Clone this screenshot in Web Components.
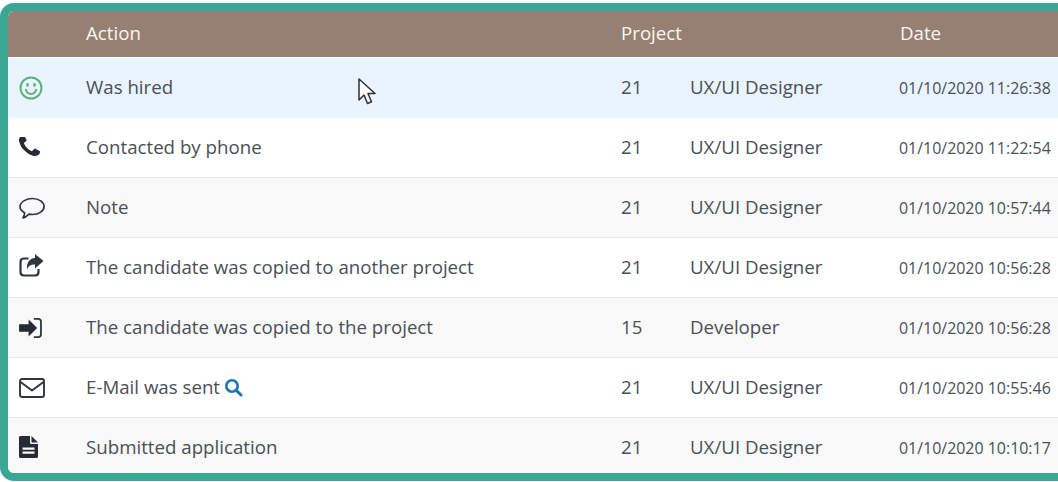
<!DOCTYPE html>
<html>
<head>
<meta charset="utf-8">
<style>
  html, body { margin: 0; background: #fff; overflow: hidden; }
  body { font-family: "Open Sans", sans-serif; }
</style>
</head>
<body>
<history-table>
  <history-row stripe="hover" project="21" job="UX/UI Designer" date="01/10/2020 11:26:38" icon="smile">Was hired</history-row>
  <history-row stripe="white" project="21" job="UX/UI Designer" date="01/10/2020 11:22:54" icon="phone">Contacted by phone</history-row>
  <history-row stripe="grey" project="21" job="UX/UI Designer" date="01/10/2020 10:57:44" icon="comment">Note</history-row>
  <history-row stripe="white" project="21" job="UX/UI Designer" date="01/10/2020 10:56:28" icon="share">The candidate was copied to another project</history-row>
  <history-row stripe="grey" project="15" job="Developer" date="01/10/2020 10:56:28" icon="signin">The candidate was copied to the project</history-row>
  <history-row stripe="white" project="21" job="UX/UI Designer" date="01/10/2020 10:55:46" icon="mail">E-Mail was sent <search-icon></search-icon></history-row>
  <history-row stripe="grey" last project="21" job="UX/UI Designer" date="01/10/2020 10:10:17" icon="file">Submitted application</history-row>
</history-table>
<mouse-cursor></mouse-cursor>

<script>
const icons = {
  smile: `<svg width="24" height="24" viewBox="0 0 24 24" fill="none" stroke="#5cb27c" stroke-width="2" stroke-linecap="round"><circle cx="12" cy="12" r="10.500"/><path d="M6.800 13.800c1 3 3.100 4.200 5.200 4.200s4.200-1.200 5.200-4.200"/><path d="M8.500 8.300v1.200M15.500 8.300v1.200" stroke-width="2.500"/></svg>`,
  phone: `<svg width="21" height="21" viewBox="192 256 1408 1408" fill="#262b33"><path d="M1600 1240q0 27-10 70.500t-21 68.500q-21 50-122 106-94 51-186 51-27 0-53-3.500t-57.500-12.500-47-14.500-55.500-20.500-49-18q-98-35-175-83-127-79-264-216t-216-264q-48-77-83-175-3-9-18-49t-20.500-55.500-14.500-47-12.500-57.500-3.500-53q0-92 51-186 56-101 106-122 25-11 68.500-21t70.500-10q14 0 21 3 18 6 53 76 11 19 30 54t35 63.500 31 53.500q3 4 17.500 25t21.500 35.500 7 28.500q0 20-28.500 50t-62 55-62 53-28.500 46q0 9 5 22.500t8.500 20.500 14 24 11.500 19q76 137 174 235t235 174q2 1 19 11.500t24 14 20.500 8.500 22.500 5q18 0 46-28.500t53-62 55-62 50-28.500q14 0 28.500 7t35.500 21.500 25 17.500q25 15 53.500 31t63.500 35 54 30q70 35 76 53 3 7 3 21z"/></svg>`,
  comment: `<svg width="26" height="23" viewBox="0 0 26 23" fill="none" stroke="#2f3640" stroke-width="1.700" stroke-linejoin="round" style="margin-top:2px"><path d="M13.500 1.500c6.400 0 11.600 3.600 11.600 8s-5.200 8-11.600 8c-1.200 0-2.400-.1-3.500-.4-1.600 1.600-3.700 3.400-6 3.700 1-1.200 1.500-3 1.600-5.100C2.700 14.300 1 12 1 9.500c0-4.400 6.100-8 12.500-8z"/></svg>`,
  share: `<svg width="25" height="23" viewBox="0 0 25 23" fill="none" style="margin-top:-4px"><path d="M9.500 4.500H5C3 4.500 1.500 6 1.500 8v10c0 2 1.500 3.500 3.500 3.500h11c2 0 3.500-1.500 3.500-3.500v-3" stroke="#2f3640" stroke-width="2.200"/><path fill="#2f3640" d="M16 0l8.500 7L16 14.500V10.500c-4 0-6.500 1-8 5C7.500 9 10 4.500 16 4z"/></svg>`,
  signin: `<svg width="23" height="20" viewBox="0 0 24 21"><path fill="#262b33" d="M10 1.500 19 10.500 10 19.500V14.500H0V6.500H10z"/><path d="M15.500 1h4.500c1.700 0 3 1.300 3 3v13c0 1.700-1.300 3-3 3h-4.500" fill="none" stroke="#2f3640" stroke-width="1.900"/></svg>`,
  mail: `<svg width="26" height="20" viewBox="0 0 26 20" fill="none" stroke="#2f3640" stroke-width="1.900" stroke-linejoin="round"><rect x="1" y="1" width="24" height="18" rx="2"/><path d="M1.500 4 13 12.500 24.500 4"/></svg>`,
  file: `<svg width="20" height="22" viewBox="0 0 20 22" fill="#262b33" style="margin-top:-1px"><path fill-rule="evenodd" d="M0 1.500C0 .700.700 0 1.500 0H11v6.500c0 .8.700 1.500 1.500 1.500H19v12.500c0 .8-.7 1.500-1.500 1.500h-16C.700 22 0 21.300 0 20.500zM3.500 11.500v2.200h12v-2.200zM3.500 15.500v2.200h12v-2.200z"/><path d="M12.500 0 19 6.500h-6.500z"/></svg>`
};

class HistoryTable extends HTMLElement {
  constructor() {
    super();
    this.attachShadow({mode: "open"});
    this.shadowRoot.innerHTML = `
      <style>
        :host { display: block; margin: 3px -40px 0 0; height: 478px; box-sizing: border-box;
                border: 8px solid #3aa795; border-radius: 14px; overflow: hidden; background: #fff; }
        .head { display: grid; grid-template-columns: 78px 535px 69px 210px 1fr; height: 46px; align-items: center;
                background: #968073; color: #fbf6f0; font-size: 18.700px; padding-bottom: 3px; box-sizing: border-box; }
        .head span:nth-child(3) { grid-column: 3 / 5; }
      </style>
      <div class="head"><span></span><span>Action</span><span>Project</span><span>Date</span></div>
      <slot></slot>
    `;
  }
}
customElements.define("history-table", HistoryTable);

class HistoryRow extends HTMLElement {
  constructor() {
    super();
    this.attachShadow({mode: "open"});
    this.shadowRoot.innerHTML = `
      <style>
        :host { display: grid; grid-template-columns: 78px 535px 69px 210px 1fr; height: 60px; align-items: center;
                box-sizing: border-box; border-bottom: 1px solid #e9e9e9; color: #4a4f57; font-size: 18.700px; background: #fff; }
        :host([stripe="hover"]) { background: #e9f4fe; border-bottom-color: #eef3f7; margin-top: 1px; }
        :host([stripe="grey"]) { background: #f9f9f9; }
        :host([last]) { border-bottom-color: transparent; }
        .ic { display: flex; align-items: center; padding-left: 11px; }
        .txt { padding-bottom: 2px; }
        .date { font-size: 15.950px; white-space: nowrap; margin-left: -1px; }
      </style>
      <div class="ic">${icons[this.getAttribute("icon")]}</div>
      <div class="txt"><slot></slot></div>
      <div class="txt">${this.getAttribute("project")}</div>
      <div class="txt">${this.getAttribute("job")}</div>
      <div class="date">${this.getAttribute("date")}</div>
    `;
  }
}
customElements.define("history-row", HistoryRow);

class SearchIcon extends HTMLElement {
  constructor() {
    super();
    this.attachShadow({mode: "open"});
    this.shadowRoot.innerHTML = `
      <style>:host { display: inline-block; vertical-align: -3px; margin-left: -1px; }</style>
      <svg width="19" height="19" viewBox="0 0 19 19" fill="none" stroke="#1b75b0" stroke-width="2.600" stroke-linecap="round" style="display:block"><circle cx="8" cy="8" r="5.700"/><path d="M12.500 12.500 17 17" stroke-width="3"/></svg>
    `;
  }
}
customElements.define("search-icon", SearchIcon);

class MouseCursor extends HTMLElement {
  constructor() {
    super();
    this.attachShadow({mode: "open"});
    this.shadowRoot.innerHTML = `
      <style>:host { position: absolute; left: 357px; top: 77px; width: 20px; height: 30px; }</style>
      <svg width="20" height="30" viewBox="0 0 20 30" style="display:block"><path d="M2 2v21l5-5 3.500 8.500 4-1.800L11 16.500h7z" fill="#fff" stroke="#2b2f36" stroke-width="1.500" stroke-linejoin="round"/></svg>
    `;
  }
}
customElements.define("mouse-cursor", MouseCursor);
</script>
</body>
</html>
